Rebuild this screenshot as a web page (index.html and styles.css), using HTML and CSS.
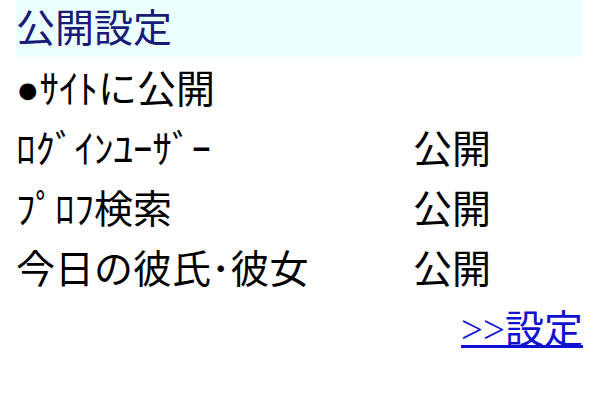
FILE: index.html
```
<!DOCTYPE html>
<html lang="ja">
<head>
<meta charset="utf-8">
<link rel="stylesheet" href="styles.css">
</head>
<body>
<div class="page">
  <h1 class="title">公開設定</h1>
  <div class="row"><span class="label">●ｻｲﾄに公開</span></div>
  <div class="row"><span class="label">ﾛｸﾞｲﾝﾕｰｻﾞｰ</span><span class="value">公開</span></div>
  <div class="row"><span class="label">ﾌﾟﾛﾌ検索</span><span class="value">公開</span></div>
  <div class="row"><span class="label">今日の彼氏･彼女</span><span class="value">公開</span></div>
  <div class="linkrow"><a href="#" class="link">&gt;&gt;設定</a></div>
</div>
</body>
</html>
```
FILE: styles.css
```
html, body {
  margin: 0;
  padding: 0;
  background: #ffffff;
}
.page {
  width: 567px;
  margin-left: 16px;
  font-family: "Liberation Serif", "Noto Sans CJK JP", serif;
  font-size: 39px;
  color: #000000;
}
.title {
  margin: 0;
  height: 57px;
  line-height: 57px;
  font-size: 39px;
  font-weight: normal;
  color: #1a1a78;
  background: #ebffff;
  margin-bottom: 3px;
}
.row {
  display: grid;
  grid-template-columns: 397px 1fr;
  height: 60px;
  line-height: 60px;
}
.linkrow {
  display: flex;
  justify-content: flex-end;
  height: 60px;
  line-height: 60px;
}
.link {
  color: #1010d0;
  text-decoration: underline;
}
```
